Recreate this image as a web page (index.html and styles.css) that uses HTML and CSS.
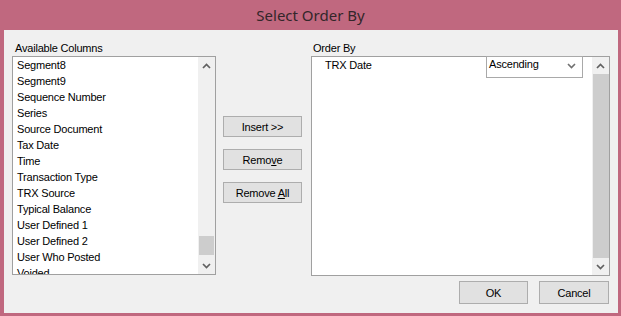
FILE: index.html
```html
<!DOCTYPE html>
<html lang="en">
<head>
    <meta charset="UTF-8">
    <title>Select Order By</title>
    <link rel="stylesheet" href="styles.css">
</head>
<body>
    <div class="window">
        <div class="titlebar">Select Order By</div>

        <div class="client">
            <div class="main">
                <div class="pane pane-left">
                    <div class="caption">Available Columns</div>
                    <div class="listbox listbox-left">
                        <ul class="items">
                            <li>Segment8</li>
                            <li>Segment9</li>
                            <li>Sequence Number</li>
                            <li>Series</li>
                            <li>Source Document</li>
                            <li>Tax Date</li>
                            <li>Time</li>
                            <li>Transaction Type</li>
                            <li>TRX Source</li>
                            <li>Typical Balance</li>
                            <li>User Defined 1</li>
                            <li>User Defined 2</li>
                            <li>User Who Posted</li>
                            <li>Voided</li>
                        </ul>
                        <div class="vscroll">
                            <div class="arrow">
                                <svg width="9" height="6" viewBox="0 0 9 6"><polyline points="1,5 4.5,1.5 8,5" /></svg>
                            </div>
                            <div class="track">
                                <div class="thumb" style="margin-top: 162px; height: 19px"></div>
                            </div>
                            <div class="arrow">
                                <svg width="9" height="6" viewBox="0 0 9 6"><polyline points="1,1 4.5,4.5 8,1" /></svg>
                            </div>
                        </div>
                    </div>
                </div>

                <div class="actions">
                    <button class="btn">Insert &gt;&gt;</button>
                    <button class="btn">Remo<u>v</u>e</button>
                    <button class="btn">Remove <u>A</u>ll</button>
                </div>

                <div class="pane pane-right">
                    <div class="caption">Order By</div>
                    <div class="listbox listbox-right">
                        <div class="rows">
                            <div class="row">
                                <span class="row-name">TRX Date</span>
                                <div class="combo">
                                    <span>Ascending</span>
                                    <svg width="9" height="6" viewBox="0 0 9 6"><polyline points="1,1 4.5,4.5 8,1" /></svg>
                                </div>
                            </div>
                        </div>
                        <div class="vscroll">
                            <div class="arrow">
                                <svg width="9" height="6" viewBox="0 0 9 6"><polyline points="1,5 4.5,1.5 8,5" /></svg>
                            </div>
                            <div class="track">
                                <div class="thumb thumb-full"></div>
                            </div>
                            <div class="arrow">
                                <svg width="9" height="6" viewBox="0 0 9 6"><polyline points="1,1 4.5,4.5 8,1" /></svg>
                            </div>
                        </div>
                    </div>
                </div>
            </div>

            <div class="footer">
                <button class="btn btn-ok">OK</button>
                <button class="btn btn-cancel">Cancel</button>
            </div>
        </div>
    </div>
</body>
</html>
```

FILE: styles.css
```css
body {
    margin: 0;
    padding: 0;
    background-color: #c0687f;
    font-family: 'Liberation Sans', Arial, sans-serif;
    font-size: 11px;
    color: #000;
}

.window {
    width: 621px;
    height: 316px;
    display: flex;
    flex-direction: column;
}

.titlebar {
    height: 30px;
    line-height: 31px;
    text-align: center;
    font-family: 'Noto Sans', sans-serif;
    font-size: 15px;
    color: #33262a;
}

.client {
    margin: 0 3px 3px 4px;
    width: 614px;
    height: 283px;
    box-sizing: border-box;
    padding: 11px 8px 9px 8px;
    background-color: #f0f0f0;
    display: flex;
    flex-direction: column;
}

.main {
    display: flex;
    height: 235px;
}

.caption {
    height: 14px;
    line-height: 14px;
    margin-bottom: 1px;
    padding-left: 3px;
    letter-spacing: -0.2px;
}

.pane-left {
    width: 204px;
}

.pane-right {
    width: 299px;
    margin-left: 9px;
}

.pane-right .caption {
    padding-left: 2px;
}

.listbox {
    display: flex;
    background-color: #fff;
    border: 1px solid #a0a0a0;
    box-sizing: border-box;
}

.listbox-left {
    height: 219px;
}

.listbox-right {
    height: 220px;
}

.items {
    list-style: none;
    margin: 0;
    padding: 0 0 0 4px;
    flex: 1;
    overflow: hidden;
}

.items li {
    height: 16px;
    line-height: 16px;
    letter-spacing: -0.2px;
    white-space: nowrap;
}

/* Scrollbar */
.vscroll {
    width: 17px;
    display: flex;
    flex-direction: column;
    background-color: #f0f0f0;
}

.vscroll .arrow {
    height: 17px;
    display: flex;
    align-items: center;
    justify-content: center;
}

.vscroll svg polyline {
    fill: none;
    stroke: #606060;
    stroke-width: 1.7;
}

.track {
    flex: 1;
    display: flex;
    flex-direction: column;
    align-items: center;
}

.thumb {
    width: 15px;
    background-color: #cdcdcd;
}

.thumb-full {
    flex: 1;
    width: 16px;
}

/* Order By rows */
.rows {
    flex: 1;
}

.row {
    display: flex;
    align-items: flex-start;
}

.row-name {
    flex: 1;
    padding-left: 13px;
    line-height: 16px;
    letter-spacing: -0.2px;
}

.combo {
    width: 97px;
    height: 22px;
    margin: -1px 9px 0 0;
    box-sizing: border-box;
    border: 1px solid #a9a9a9;
    background-color: #fff;
    display: flex;
    align-items: flex-start;
    justify-content: space-between;
    padding: 0 6px 0 2px;
    line-height: 15px;
    letter-spacing: -0.2px;
}

.combo svg {
    margin-top: 6px;
}

.combo svg polyline {
    fill: none;
    stroke: #707070;
    stroke-width: 1.6;
}

/* Buttons */
.btn {
    font-family: 'Liberation Sans', Arial, sans-serif;
    font-size: 11px;
    color: #000;
    background-color: #e1e1e1;
    border: 1px solid #adadad;
    padding: 0;
    margin: 0;
    box-sizing: border-box;
    letter-spacing: -0.2px;
}

.actions {
    display: flex;
    flex-direction: column;
    gap: 12px;
    width: 79px;
    margin-left: 7px;
    padding-top: 75px;
}

.actions .btn {
    width: 79px;
    height: 21px;
}

.footer {
    display: flex;
    justify-content: flex-end;
    gap: 11px;
    margin-top: 5px;
    padding-right: 1px;
}

.footer .btn {
    height: 23px;
}

.btn-ok {
    width: 69px;
}

.btn-cancel {
    width: 70px;
}
```
